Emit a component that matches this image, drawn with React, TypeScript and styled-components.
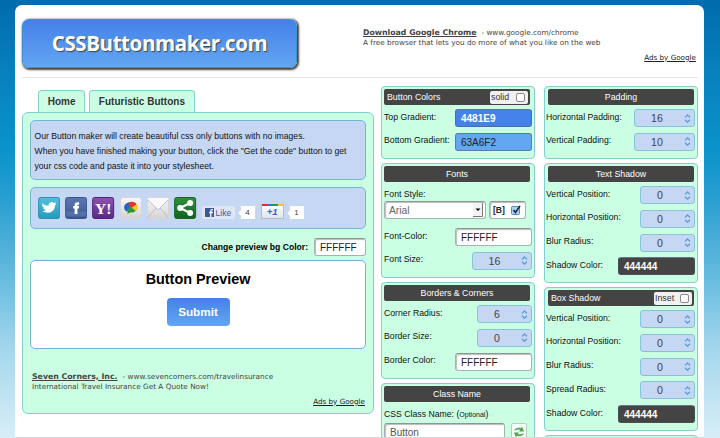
import React from 'react';
import styled, { createGlobalStyle } from 'styled-components';

const GlobalStyle = createGlobalStyle`
  * { box-sizing: border-box; }
  html { height: 438px; overflow: hidden; }
  body {
    margin: 0;
    height: 438px;
    overflow: hidden;
    font: 10px/12px "Liberation Sans", Arial, sans-serif;
    color: #111;
  }
`;

const Backdrop = styled.div`
  height: 438px;
  padding: 5px 16px 0 15px;
  overflow: hidden;
  background: linear-gradient(#006bad 0, #0880be 70px, #0a93cb 150px, #2a9fd1 200px, #68bce0 280px, #a5d7ec 350px, #d8eef7 438px);
`;

const Page = styled.div`
  height: 433px;
  overflow: hidden;
  padding: 13px 6px 0 7px;
  background: #fff;
  border-radius: 7px 7px 0 0;
  border-bottom: 1px solid #d4d8da;
`;

const Header = styled.header`
  display: flex;
  height: 60px;
  border-bottom: 1px solid #e6e6e6;
`;

const Logo = styled.h1`
  display: flex;
  align-items: center;
  justify-content: center;
  width: 275px;
  height: 49px;
  margin: 1px 1px 0 0;
  padding: 0 0 1px 0;
  border: 1px solid #3d92cd;
  border-radius: 7px;
  background: linear-gradient(#4481e9, #63a6f2);
  box-shadow: 1px 1px 2px 1px #444;
  color: #fff;
  font: bold 20.5px/24px "Open Sans", "Noto Sans", sans-serif;
  letter-spacing: -0.4px;
  text-shadow: 1px 1px 1px #444;
  white-space: nowrap;
`;

const Ad = styled.section<{ $indent: number; $top: number; $right: number }>`
  flex: 1;
  padding: ${p => p.$top}px ${p => p.$right}px 0 ${p => p.$indent}px;
  color: #444;
  font: 7.3px/10px "DejaVu Sans", Verdana, sans-serif;
  white-space: nowrap;
`;

const AdTitle = styled.a`
  margin-right: 5px;
  font-size: 7.8px;
  font-weight: bold;
  text-decoration: underline;
`;

const AdCredit = styled.a<{ $gap: number }>`
  display: block;
  margin-top: ${p => p.$gap}px;
  color: #222;
  font-size: 7.2px;
  text-align: right;
  text-decoration: underline;
`;

const Columns = styled.div`
  display: grid;
  grid-template-columns: 352px 154px 154px;
  column-gap: 8px;
  padding-top: 8px;
  > :nth-child(2) { margin-left: -1px; margin-right: 1px; }
`;

const Tabs = styled.nav`
  display: flex;
  gap: 4px;
  padding: 4px 0 0 16px;
`;

const Tab = styled.a`
  height: 22px;
  padding: 0 8.7px;
  border: 1px solid #83cfcc;
  border-bottom: 0;
  border-radius: 4px 4px 0 0;
  background: #caffe3;
  color: #333;
  font-size: 10px;
  font-weight: bold;
  line-height: 22px;
  white-space: nowrap;
`;

const Main = styled.main`
  height: 302px;
  padding: 7px;
  border: 1px solid #83cfcc;
  border-radius: 6px;
  background: #caffe3;
`;

const Box = styled.section`
  border: 1.5px solid #72b7d4;
  border-radius: 5px;
  background: #c6d7f4;
`;

const Intro = styled(Box)`
  height: 60px;
  padding: 8px 3.5px;
  font-size: 8.63px;
  line-height: 15px;
  white-space: nowrap;
`;

const Social = styled(Box)`
  display: flex;
  gap: 5px;
  height: 42px;
  margin-top: 7px;
  padding: 9px 6px 9px 6.8px;
`;

const Icon = styled.svg`
  flex: none;
  width: 22.3px;
  height: 22px;
`;

const Counters = styled.div`
  display: flex;
  align-items: flex-end;
  font-size: 8px;
  color: #444;
`;

const Like = styled.div`
  display: flex;
  align-items: center;
  gap: 2px;
  width: 33px;
  height: 13px;
  padding-left: 3px;
  border-radius: 2px;
  background: #dfe6f4;
  color: #3b5998;
  font-size: 8.5px;
  svg { width: 9px; height: 9px; }
`;

const Count = styled.div<{ $gap: number }>`
  position: relative;
  width: 14px;
  height: 13px;
  margin-left: 6px;
  margin-right: ${p => p.$gap}px;
  background: #fff;
  line-height: 13px;
  text-align: center;
  &::before {
    content: '';
    position: absolute;
    left: -2px;
    top: 5px;
    width: 4px;
    height: 4px;
    background: #fff;
    transform: rotate(45deg);
  }
`;

const PlusOne = styled.div`
  width: 23px;
  height: 15px;
  padding-top: 2px;
  border: 1px solid #b4bbc8;
  border-top: 0;
  border-radius: 1px;
  background:
    linear-gradient(90deg, #e02a27 0 25%, #3a6fe0 25% 50%, #23a04b 50% 75%, #f4c23a 75%) top / 100% 2px no-repeat,
    linear-gradient(#fff, #dfe3ea);
  color: #2c62d6;
  font-size: 9.5px;
  font-weight: bold;
  font-style: italic;
  line-height: 12px;
  text-align: center;
`;

const PreviewColor = styled.div`
  display: flex;
  align-items: center;
  justify-content: flex-end;
  gap: 6px;
  height: 18px;
  margin: 9px 0 4px;
  color: #000;
  font-size: 8.6px;
  font-weight: bold;
`;

const Preview = styled(Box)`
  display: flex;
  flex-direction: column;
  align-items: center;
  height: 89px;
  padding-top: 8px;
  background: #fff;
`;

const PreviewTitle = styled.h2`
  margin: 0;
  color: #000;
  font-size: 14.4px;
  line-height: 20px;
`;

const Submit = styled.button`
  width: 63px;
  height: 28px;
  margin-top: 9px;
  padding: 0;
  border: 0;
  border-radius: 4px;
  background: linear-gradient(#4481e9, #63a6f2);
  color: #fff;
  font: bold 11.7px/28px "Liberation Sans", Arial, sans-serif;
`;

const Stack = styled.div`
  display: flex;
  flex-direction: column;
  gap: 4px;
`;

const Panel = styled.section<{ $height: number; $left: number }>`
  flex: none;
  height: ${p => p.$height}px;
  padding: 2px 2px 0 ${p => p.$left}px;
  border: 1px solid #83cfcc;
  border-radius: 4px;
  background: #caffe3;
`;

const PanelTitle = styled.h3<{ $split?: boolean; $indent: number }>`
  display: flex;
  align-items: center;
  justify-content: ${p => (p.$split ? 'space-between' : 'center')};
  width: 146px;
  height: 16px;
  margin: 0 0 4px ${p => p.$indent}px;
  padding: ${p => (p.$split ? '0 2px 0 3px' : '0')};
  border-radius: 2px;
  background: #444;
  color: #fff;
  font-size: 8.8px;
  font-weight: normal;
`;

const Toggle = styled.label`
  display: flex;
  align-items: center;
  justify-content: space-between;
  width: 38px;
  height: 13px;
  padding: 0 3px 0 1px;
  border-radius: 2px;
  background: #f1f1f1;
  color: #333;
`;

const Check = styled.span`
  width: 9px;
  height: 9px;
  border: 1px solid #8b8b8b;
  border-radius: 2px;
  background: #fff;
`;

const Row = styled.div<{ $height?: number }>`
  display: flex;
  align-items: flex-start;
  justify-content: space-between;
  height: ${p => p.$height ?? 23.75}px;
  white-space: nowrap;
`;

const Label = styled.span`
  padding-top: 1.5px;
  color: #111;
  font-size: 8.7px;
  small { font-size: 7px; }
`;

const Spinner = styled.div<{ $width: number }>`
  display: flex;
  align-items: center;
  width: ${p => p.$width}px;
  height: 18px;
  padding-right: 3px;
  border: 1px solid #85c4d8;
  border-radius: 3px;
  background: #c6d7f4;
  color: #444;
  font-size: 10.6px;
  span { flex: 1; padding-left: 4px; text-align: center; }
  svg { width: 7px; height: 9px; margin-left: 9px; }
`;

const Field = styled.div<{ $width: number; $bg?: string; $color?: string; $bold?: boolean; $flat?: boolean }>`
  flex: none;
  width: ${p => p.$width}px;
  height: 18px;
  padding-left: 5px;
  border: 1px solid ${p => (p.$flat ? 'rgba(80,90,100,.5)' : '#a5b3b0')};
  border-top-color: ${p => (p.$flat ? '#6a7688' : '#8c9693')};
  border-radius: 3px;
  background: ${p => p.$bg ?? '#fff'};
  box-shadow: ${p => (p.$flat ? 'none' : 'inset 1px 1px 1px #bbb')};
  color: ${p => p.$color ?? '#222'};
  font-size: 10px;
  font-weight: ${p => (p.$bold ? 'bold' : 'normal')};
  line-height: 17px;
`;

const Select = styled(Field)`
  display: flex;
  justify-content: space-between;
  padding: 1px 2px 1px 4px;
  color: #666;
  font-size: 10.3px;
  line-height: 15px;
  svg { width: 10px; height: 14px; }
`;

const BoldBox = styled(Field)`
  display: flex;
  align-items: center;
  gap: 6px;
  margin-right: 6px;
  padding-left: 3px;
  font-size: 8.6px;
  font-weight: bold;
  svg { width: 10px; height: 10px; }
`;

const Refresh = styled.div`
  width: 16px;
  height: 19px;
  margin-right: 5px;
  padding: 2px 1px;
  border: 1px solid #b3cdbf;
  border-radius: 2px;
  background: #f4fff8;
  svg { display: block; width: 12px; height: 12px; }
`;

function Step({ label, value, width = 55 }: { label: string; value: number; width?: number }) {
  return (
    <Row>
      <Label>{label}</Label>
      <Spinner $width={width}>
        <span>{value}</span>
        <svg viewBox="0 0 7 9" fill="none" stroke="#5a9be0" strokeWidth="1.3">
          <path d="M1 3.4 3.5 1 6 3.4M1 5.8 3.5 8.2 6 5.8" />
        </svg>
      </Spinner>
    </Row>
  );
}

function SocialIcons() {
  return (
    <>
      <Icon viewBox="0 0 22 22">
        <defs>
          <linearGradient id="tw" x2="0" y2="1"><stop stopColor="#55bfdc" /><stop offset="1" stopColor="#239bbb" /></linearGradient>
          <linearGradient id="fb" x2="0" y2="1"><stop stopColor="#5b77b0" /><stop offset="1" stopColor="#3a5794" /></linearGradient>
          <linearGradient id="ya" x2="0" y2="1"><stop stopColor="#8b55ae" /><stop offset="1" stopColor="#5d2686" /></linearGradient>
          <linearGradient id="gr" x2="0" y2="1"><stop stopColor="#f8f8f8" /><stop offset="1" stopColor="#d4d4d4" /></linearGradient>
          <linearGradient id="sh" x2="0" y2="1"><stop stopColor="#2f913b" /><stop offset="1" stopColor="#136020" /></linearGradient>
        </defs>
        <rect x=".5" y=".5" width="21" height="21" rx="2" fill="url(#tw)" stroke="#2b91b0" />
        <path d="M4 6c2 2 4 2.600 6.500 2.500 0-3 3-4.500 5.200-2.500l2.300-.8-1 1.700 1.300-.2-1.500 1.700c0 5-4.200 7.900-8.500 7.100-1.800 0-3-.7-4.100-1.400 1.600.1 2.800-.2 3.900-1-1.500 0-2.500-.9-2.900-2l1.200-.1C4.800 10.500 4 9.400 4 8l1.200.3C4 7.400 3.700 6.900 4 6z" fill="#fff" />
      </Icon>
      <Icon viewBox="0 0 22 22">
        <rect x=".5" y=".5" width="21" height="21" rx="2" fill="url(#fb)" stroke="#3a558d" />
        <path d="M1 14.500h20v5H1z" fill="#7891c2" opacity=".35" />
        <path d="M9.500 17v-5.500H8V9h1.500V7.800C9.500 5.700 11 5 14 5.400v2.300c-1.300-.1-1.700 0-1.700.8V9H14l-.3 2.500h-1.400V17z" fill="#fff" />
      </Icon>
      <Icon viewBox="0 0 22 22">
        <rect x=".5" y=".5" width="21" height="21" rx="2" fill="url(#ya)" stroke="#56227a" />
        <text x="11" y="16.500" textAnchor="middle" fill="#fff" fontFamily="Liberation Serif, serif" fontSize="15.500" fontWeight="bold">Y!</text>
      </Icon>
      <Icon viewBox="0 0 22 22">
        <rect x=".5" y=".5" width="21" height="21" rx="3" fill="url(#gr)" stroke="#d3d6db" />
        <path d="M4 10.500C4 7.500 6.500 5 10 5.500l.5 4L6.500 14.500C5 13.500 4 12.500 4 10.500z" fill="#2760d0" />
        <path d="M8.500 5.500c3-1.200 7-.8 8 2L11.500 11 8.500 8.500z" fill="#e63525" />
        <path d="M16.500 7.500c2.200 2 1.500 5-1 6.500l-4-3z" fill="#f3c81d" />
        <path d="m6 14 4.500-4.500 5 4.500c-2 1.600-4 1.700-5.500 1.500l-3 1.500.8-2.300z" fill="#2c963a" />
      </Icon>
      <Icon viewBox="0 0 22 22">
        <rect x=".5" y=".5" width="21" height="21" rx="1" fill="url(#gr)" stroke="#d5d5d5" />
        <path d="M1 2.500 11 13 21 2.500V1H1z" fill="#fafafa" />
        <path d="m1 20.500 8-9.500M21 20.500 13 11M1 3l10 10L21 3" fill="none" stroke="#bbb" strokeWidth=".9" />
      </Icon>
      <Icon viewBox="0 0 22 22">
        <rect x=".5" y=".5" width="21" height="21" rx="2" fill="url(#sh)" stroke="#17672a" />
        <path d="M16 6 6 11l10 5" fill="none" stroke="#fff" strokeWidth="2.200" />
        <circle cx="16" cy="6" r="3" fill="#fff" /><circle cx="6" cy="11" r="3" fill="#fff" /><circle cx="16" cy="16" r="3" fill="#fff" />
      </Icon>
    </>
  );
}

export default function App() {
  return (
    <>
      <GlobalStyle />
      <Backdrop>
        <Page>
          <Header>
            <Logo>CSSButtonmaker.com</Logo>
            <Ad $indent={65} $top={9.6} $right={2}>
              <AdTitle>Download Google Chrome</AdTitle>- www.google.com/chrome
              <br />A free browser that lets you do more of what you like on the web
              <AdCredit $gap={5}>Ads by Google</AdCredit>
            </Ad>
          </Header>
          <Columns>
            <div>
              <Tabs><Tab>Home</Tab><Tab>Futuristic Buttons</Tab></Tabs>
              <Main>
                <Intro>
                  Our Button maker will create beautiful css only buttons with no images.<br />
                  When you have finished making your button, click the "Get the code" button to get<br />
                  your css code and paste it into your stylesheet.
                </Intro>
                <Social>
                  <SocialIcons />
                  <Counters>
                    <Like>
                      <svg viewBox="0 0 9 9"><path fill="#3b5998" d="M0 0h9v9H0z" /><path fill="none" stroke="#fff" strokeWidth="1.300" d="M8 1.700H7q-1.200 0-1.200 1.500V9M4.200 4.500H8" /></svg>
                      Like
                    </Like>
                    <Count $gap={6}>4</Count>
                    <PlusOne>+1</PlusOne>
                    <Count $gap={0}>1</Count>
                  </Counters>
                </Social>
                <PreviewColor>Change preview bg Color:<Field $width={52}>FFFFFF</Field></PreviewColor>
                <Preview><PreviewTitle>Button Preview</PreviewTitle><Submit>Submit</Submit></Preview>
                <Ad $indent={2} $top={22.6} $right={1}>
                  <AdTitle>Seven Corners, Inc.</AdTitle>- www.sevencorners.com/travelinsurance
                  <br />International Travel Insurance Get A Quote Now!
                  <AdCredit $gap={5}>Ads by Google</AdCredit>
                </Ad>
              </Main>
            </div>
            <Stack>
              <Panel $height={73} $left={2}>
                <PanelTitle $split $indent={0}>Button Colors<Toggle>solid<Check /></Toggle></PanelTitle>
                <Row><Label>Top Gradient:</Label><Field $width={77} $bg="#4481e9" $color="#fff" $bold $flat>4481E9</Field></Row>
                <Row><Label>Bottom Gradient:</Label><Field $width={77} $bg="#63a6f2" $flat>63A6F2</Field></Row>
              </Panel>
              <Panel $height={115} $left={2}>
                <PanelTitle $indent={0}>Fonts</PanelTitle>
                <Row $height={15}><Label>Font Style:</Label></Row>
                <Row $height={27}>
                  <Select $width={102}>Arial
                    <svg viewBox="0 0 10 14"><path fill="#f3f3f3" d="M0 0h10v14H0z" /><path fill="none" stroke="#777" d="M9.500 0v13.500H0" /><path d="M2.500 5.500h5L5 8z" /></svg>
                  </Select>
                  <BoldBox $width={37}>[B]
                    <svg viewBox="0 0 10 10"><rect x=".5" y="1.500" width="8" height="8" rx="1" fill="#a9d1f4" stroke="#5d86b2" /><path d="m2.500 5 2 2.500L9 .8" fill="none" stroke="#10203a" strokeWidth="1.500" /></svg>
                  </BoldBox>
                </Row>
                <Row><Label>Font-Color:</Label><Field $width={77}>FFFFFF</Field></Row>
                <Step label="Font Size:" value={16} width={60} />
              </Panel>
              <Panel $height={97} $left={2}>
                <PanelTitle $indent={0}>Borders &amp; Corners</PanelTitle>
                <Step label="Corner Radius:" value={6} />
                <Step label="Border Size:" value={0} />
                <Row><Label>Border Color:</Label><Field $width={77}>FFFFFF</Field></Row>
              </Panel>
              <Panel $height={80} $left={2}>
                <PanelTitle $indent={0}>Class Name</PanelTitle>
                <Row $height={17}><Label>CSS Class Name: (<small>Optional</small>)</Label></Row>
                <Row>
                  <Field $width={121} $color="#555">Button</Field>
                  <Refresh><svg viewBox="0 0 12 12"><path fill="#4ba64d" d="M1 5C2 2 5 1 8 2.200L9 .5l2 5H6l1.200-1.600C5 3.200 3 3.500 1 5zM11 7C10 10 7 11 4 9.800l-1 1.700-2-5h5L4.800 8.100C7 8.800 9 8.500 11 7z" /></svg></Refresh>
                </Row>
              </Panel>
            </Stack>
            <Stack>
              <Panel $height={73} $left={1}>
                <PanelTitle $indent={2}>Padding</PanelTitle>
                <Step label="Horizontal Padding:" value={16} width={61} />
                <Step label="Vertical Padding:" value={10} width={61} />
              </Panel>
              <Panel $height={120} $left={1}>
                <PanelTitle $indent={2}>Text Shadow</PanelTitle>
                <Step label="Vertical Position:" value={0} />
                <Step label="Horizontal Position:" value={0} />
                <Step label="Blur Radius:" value={0} />
                <Row><Label>Shadow Color:</Label><Field $width={77} $bg="#444" $color="#fff" $bold $flat>444444</Field></Row>
              </Panel>
              <Panel $height={144} $left={1}>
                <PanelTitle $split $indent={2}>Box Shadow<Toggle>Inset<Check /></Toggle></PanelTitle>
                <Step label="Vertical Position:" value={0} />
                <Step label="Horizontal Position:" value={0} />
                <Step label="Blur Radius:" value={0} />
                <Step label="Spread Radius:" value={0} />
                <Row><Label>Shadow Color:</Label><Field $width={77} $bg="#444" $color="#fff" $bold $flat>444444</Field></Row>
              </Panel>
              <Panel $height={60} $left={1} />
            </Stack>
          </Columns>
        </Page>
      </Backdrop>
    </>
  );
}
